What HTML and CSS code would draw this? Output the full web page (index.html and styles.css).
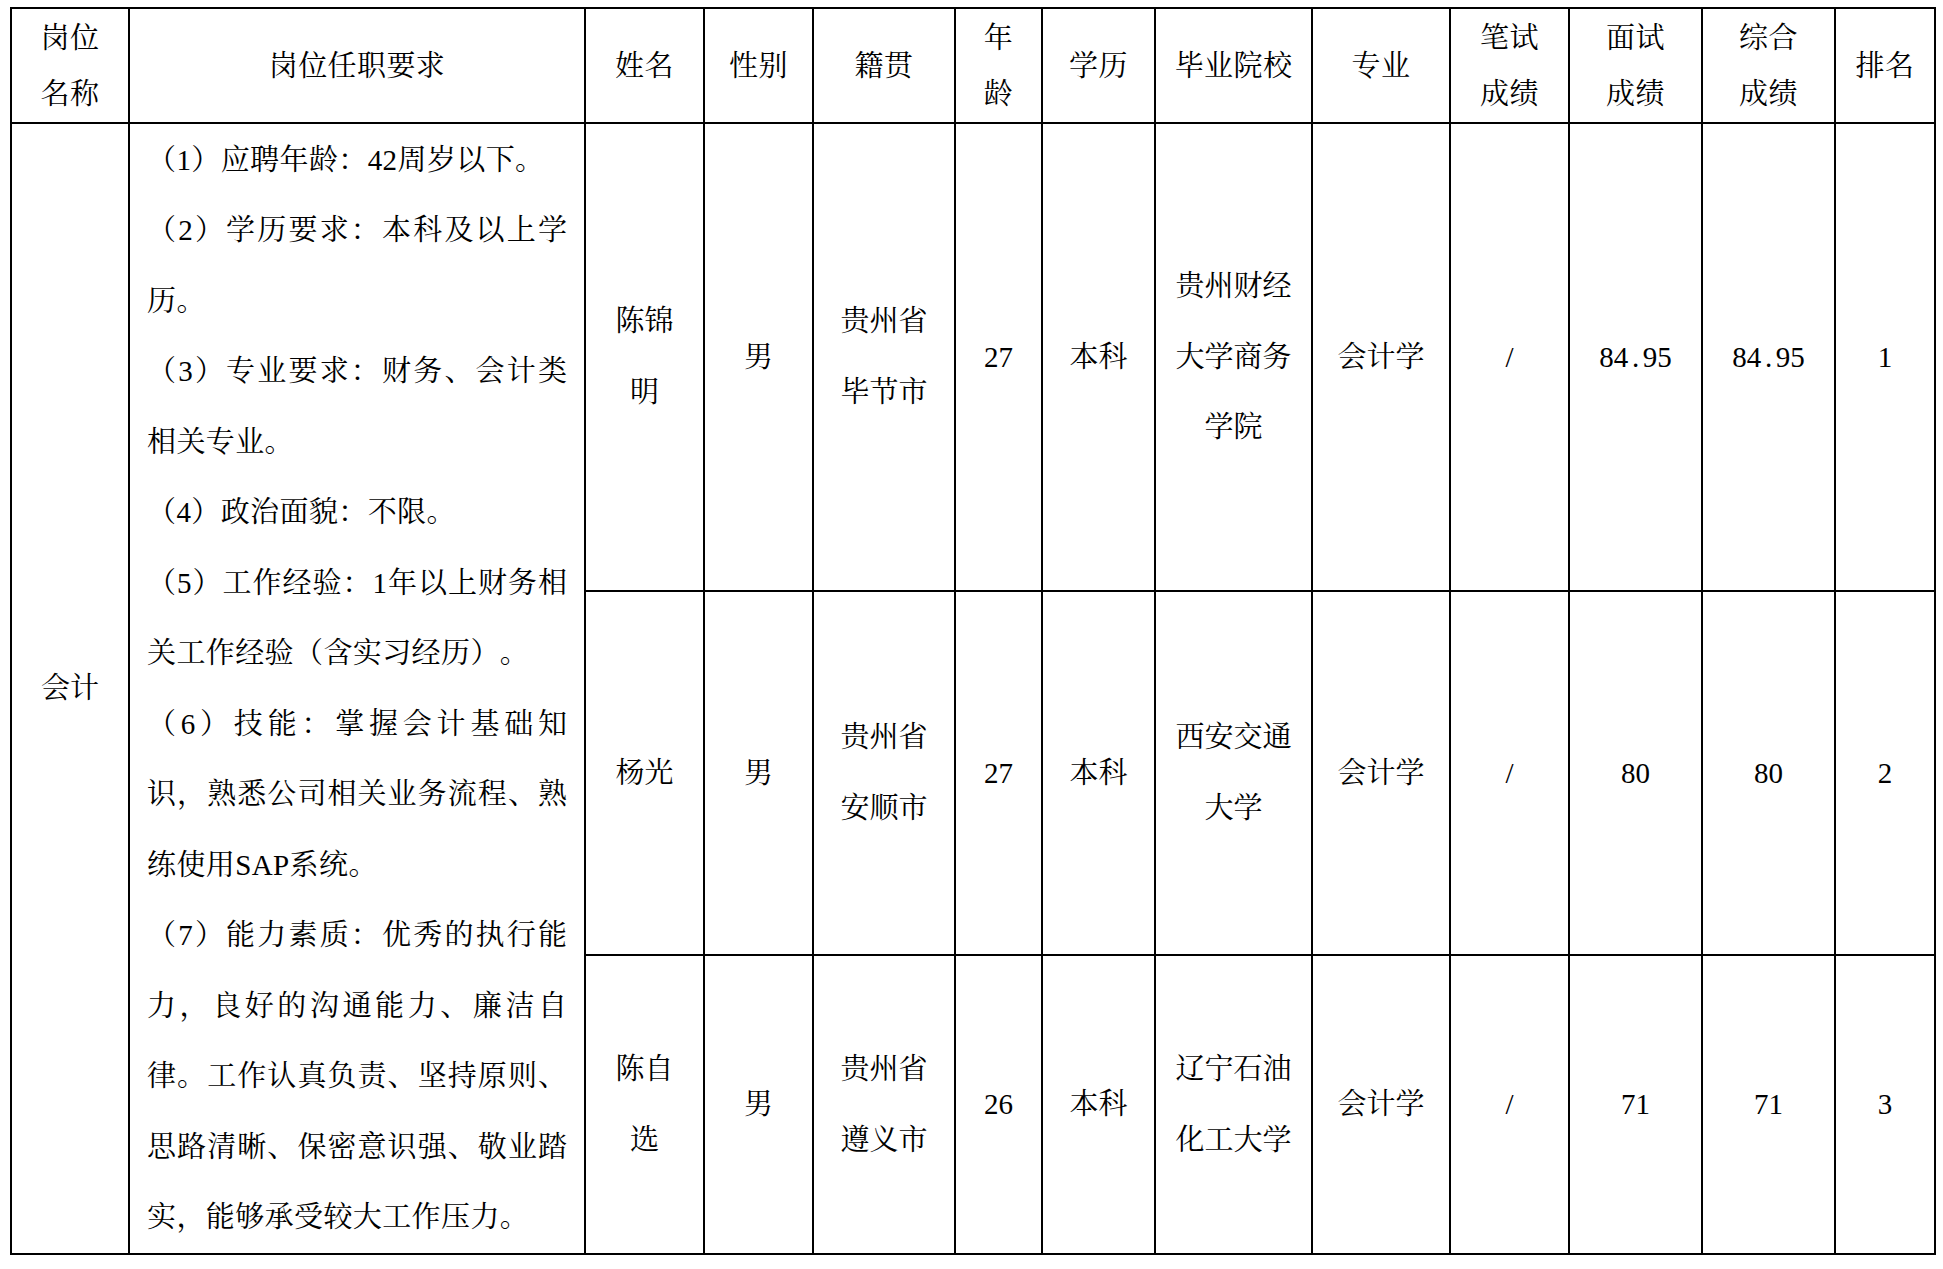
FILE: index.html
```html
<!DOCTYPE html>
<html lang="zh-CN">
<head>
<meta charset="utf-8">
<title>岗位拟录用人员名单</title>
<link rel="stylesheet" href="styles.css">
</head>
<body>
<table class="grid">
  <colgroup>
    <col class="c-post">
    <col class="c-req">
    <col class="c-name">
    <col class="c-sex">
    <col class="c-home">
    <col class="c-age">
    <col class="c-edu">
    <col class="c-school">
    <col class="c-major">
    <col class="c-written">
    <col class="c-interview">
    <col class="c-total">
    <col class="c-rank">
  </colgroup>
  <tr class="head">
    <th>岗位<br>名称</th>
    <th>岗位任职要求</th>
    <th>姓名</th>
    <th>性别</th>
    <th>籍贯</th>
    <th>年<br>龄</th>
    <th>学历</th>
    <th>毕业院校</th>
    <th>专业</th>
    <th>笔试<br>成绩</th>
    <th>面试<br>成绩</th>
    <th>综合<br>成绩</th>
    <th>排名</th>
  </tr>
  <tr class="r1">
    <td rowspan="3">会计</td>
    <td rowspan="3" class="req">
      <div class="ln">（1）应聘年龄：42周岁以下。</div>
      <div class="ln just">（2）学历要求：本科及以上学</div>
      <div class="ln">历。</div>
      <div class="ln just">（3）专业要求：财务、会计类</div>
      <div class="ln">相关专业。</div>
      <div class="ln">（4）政治面貌：不限。</div>
      <div class="ln just">（5）工作经验：1年以上财务相</div>
      <div class="ln">关工作经验（含实习经历）。</div>
      <div class="ln just">（6）技能：掌握会计基础知</div>
      <div class="ln just">识，熟悉公司相关业务流程、熟</div>
      <div class="ln">练使用SAP系统。</div>
      <div class="ln just">（7）能力素质：优秀的执行能</div>
      <div class="ln just">力，良好的沟通能力、廉洁自</div>
      <div class="ln just">律。工作认真负责、坚持原则、</div>
      <div class="ln just">思路清晰、保密意识强、敬业踏</div>
      <div class="ln">实，能够承受较大工作压力。</div>
    </td>
    <td>陈锦<br>明</td>
    <td>男</td>
    <td>贵州省<br>毕节市</td>
    <td>27</td>
    <td>本科</td>
    <td>贵州财经<br>大学商务<br>学院</td>
    <td>会计学</td>
    <td>/</td>
    <td>84<span class="dot">.</span>95</td>
    <td>84<span class="dot">.</span>95</td>
    <td>1</td>
  </tr>
  <tr class="r2">
    <td>杨光</td>
    <td>男</td>
    <td>贵州省<br>安顺市</td>
    <td>27</td>
    <td>本科</td>
    <td>西安交通<br>大学</td>
    <td>会计学</td>
    <td>/</td>
    <td>80</td>
    <td>80</td>
    <td>2</td>
  </tr>
  <tr class="r3">
    <td>陈自<br>选</td>
    <td>男</td>
    <td>贵州省<br>遵义市</td>
    <td>26</td>
    <td>本科</td>
    <td>辽宁石油<br>化工大学</td>
    <td>会计学</td>
    <td>/</td>
    <td>71</td>
    <td>71</td>
    <td>3</td>
  </tr>
</table>
</body>
</html>
```

FILE: styles.css
```css
html, body {
  margin: 0;
  padding: 0;
  background: #ffffff;
}

body {
  font-family: "Liberation Serif", "Noto Serif CJK SC", "Noto Sans CJK SC", serif;
  font-size: 29px;
  color: #000000;
  text-spacing-trim: space-all;
}

.grid {
  margin: 7px 0 0 10px;
  width: 1926px;
  table-layout: fixed;
  border-collapse: collapse;
}

.grid th,
.grid td {
  border: 2px solid #000000;
  padding: 0;
  text-align: center;
  vertical-align: middle;
  font-weight: 400;
  line-height: 70.6px;
}

.grid th {
  line-height: 56px;
  letter-spacing: 0.4px;
}

.c-post { width: 118px; }
.c-req { width: 456px; }
.c-name { width: 119px; }
.c-sex { width: 109px; }
.c-home { width: 142px; }
.c-age { width: 87px; }
.c-edu { width: 113px; }
.c-school { width: 157px; }
.c-major { width: 138px; }
.c-written { width: 119px; }
.c-interview { width: 133px; }
.c-total { width: 133px; }
.c-rank { width: 100px; }

.head { height: 115px; }
.r1 { height: 468px; }
.r2 { height: 364px; }
.r3 { height: 299px; }

.grid td.req {
  padding: 0 17px;
  text-align: left;
  line-height: 70.5px;
}

.ln {
  white-space: nowrap;
  text-align: left;
  letter-spacing: 0.4px;
}

.ln.just {
  white-space: normal;
  letter-spacing: 0;
  text-align: justify;
  text-align-last: justify;
}

.dot {
  display: inline-block;
  width: 0.5em;
  text-align: center;
}
```
